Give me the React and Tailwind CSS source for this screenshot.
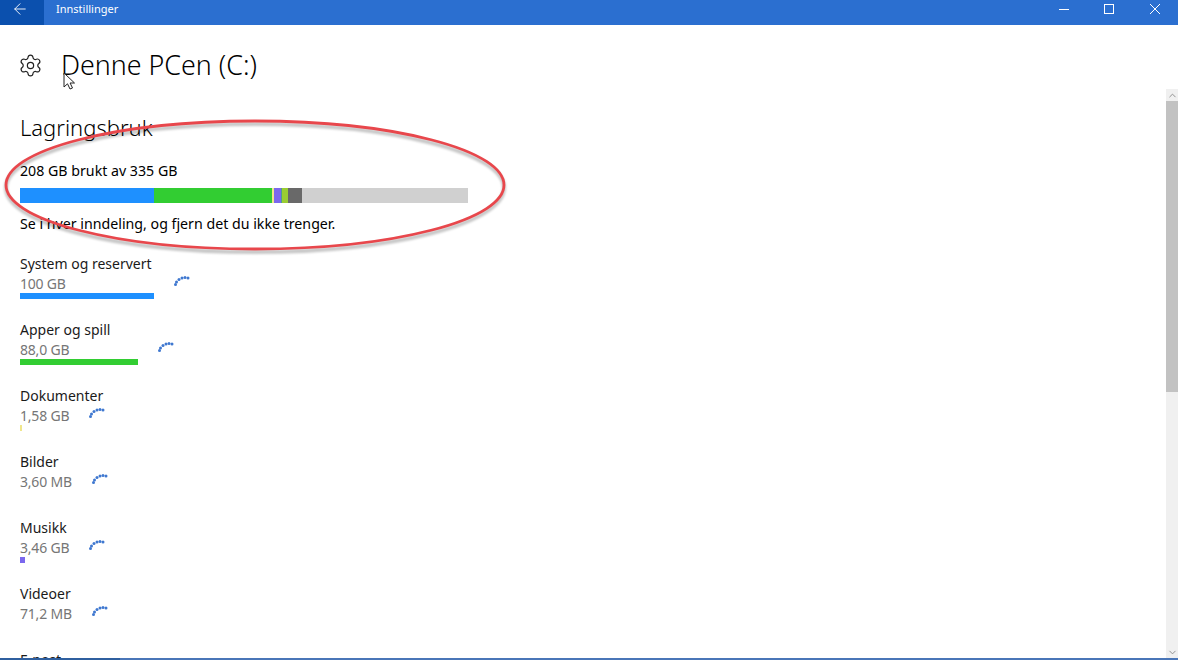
import React from 'react';
import { ArrowLeft, Settings, ChevronUp, ChevronDown } from 'lucide-react';

const categories = [
  { name: 'System og reservert', size: '100 GB', barWidth: 'w-[134px]', barColor: 'bg-[#1e90ff]' },
  { name: 'Apper og spill', size: '88,0 GB', barWidth: 'w-[118px]', barColor: 'bg-[#32cd32]' },
  { name: 'Dokumenter', size: '1,58 GB', barWidth: 'w-[2px]', barColor: 'bg-[#f0e68c]' },
  { name: 'Bilder', size: '3,60 MB', barWidth: 'w-0', barColor: 'bg-white' },
  { name: 'Musikk', size: '3,46 GB', barWidth: 'w-[5px]', barColor: 'bg-[#7b68ee]' },
  { name: 'Videoer', size: '71,2 MB', barWidth: 'w-0', barColor: 'bg-white' },
  { name: 'E-post', size: '', barWidth: 'w-0', barColor: 'bg-white' },
];

const segments = [
  'w-[134px] bg-[#1e90ff]',
  'w-[118px] bg-[#32cd32]',
  'w-[2px] bg-[#f0e68c]',
  'w-[7px] bg-[#7b68ee]',
  'w-[1px] bg-[#4f9d8f]',
  'w-[6px] bg-[#9acd32]',
  'w-[14px] bg-[#696969]',
  'flex-1 bg-[#d0d0d0]',
];

// loading dots, frozen mid animation
function Spinner() {
  const dots = [[1.5, 9.5], [2.5, 7], [5, 4.5], [8, 3], [11, 2.5], [14, 3]];
  return (
    <svg width="16" height="12" viewBox="0 0 16 12" className="mt-[22px] shrink-0">
      {dots.map(([cx, cy]) => (
        <circle key={cx} cx={cx} cy={cy} r="1.5" fill="#3f78d0" />
      ))}
    </svg>
  );
}

function CategoryRow({ item }) {
  return (
    <div className="flex h-[66px] items-start gap-[20px]">
      <div className="pt-[1px]">
        <div className="w-0 whitespace-nowrap text-[14px] leading-[20px] text-[#1a1a1a]">{item.name}</div>
        <div className="whitespace-nowrap text-[14px] leading-[20px] tracking-[-0.2px] text-[#767676]">{item.size}</div>
        <div className={`-mt-[1px] h-[6px] ${item.barWidth} ${item.barColor}`} />
      </div>
      {item.size && <Spinner />}
    </div>
  );
}

export default function App() {
  return (
    <div className="relative flex h-[660px] w-[1178px] flex-col overflow-hidden bg-white font-['Noto_Sans','Open_Sans',sans-serif]">
      {/* Title bar */}
      <div className="flex h-[25px] shrink-0 items-start bg-[#2b6fd0] text-white">
        <div className="flex h-full w-[44px] items-start justify-center bg-[#0b50ae] pr-1">
          <ArrowLeft size={18} strokeWidth={1.2} />
        </div>
        <span className="ml-3 text-[11px] leading-[17px]">Innstillinger</span>
        <div className="ml-auto flex items-start pt-[4px]">
          <div className="flex h-[10px] w-[46px] items-center justify-center pl-[1px]"><div className="h-px w-[10px] bg-white" /></div>
          <div className="flex h-[10px] w-[46px] justify-center"><div className="size-[10px] border border-white" /></div>
          <div className="flex h-[10px] w-[46px] justify-center">
            <svg width="10" height="10" viewBox="0 0 10 10" stroke="#fff" strokeWidth="1">
              <path d="M0 0l10 10M10 0L0 10" />
            </svg>
          </div>
        </div>
      </div>

      {/* Page header */}
      <div className="flex h-[64px] shrink-0 items-start pl-[18px] pt-[28px]">
        <Settings size={25} strokeWidth={1.15} className="text-[#222]" />
        <h1 className="ml-[18px] -mt-[6px] text-[26.8px] font-light leading-[36px] text-black">Denne PCen (C:)</h1>
      </div>

      <div className="flex min-h-0 flex-1">
        {/* Content */}
        <div className="min-w-0 flex-1 overflow-hidden pl-[20px] pt-[23px]">
          <h2 className="text-[22px] font-light leading-[30px] text-black">Lagringsbruk</h2>
          <p className="mt-[19px] text-[14.2px] leading-[20px] text-black">208 GB brukt av 335 GB</p>
          <div className="mt-[7px] flex h-[15px] w-[448px]">
            {segments.map((seg) => (
              <div key={seg} className={seg} />
            ))}
          </div>
          <p className="mt-[11px] text-[14.2px] leading-[20px] text-black">Se i hver inndeling, og fjern det du ikke trenger.</p>
          <div className="mt-[19px]">
            {categories.map((item) => (
              <CategoryRow key={item.name} item={item} />
            ))}
          </div>
        </div>

        {/* Scrollbar */}
        <div className="flex w-3 shrink-0 flex-col bg-[#f0f0f0] text-[#8a8a8a]">
          <div className="flex h-3 items-center justify-center"><ChevronUp size={11} strokeWidth={2} /></div>
          <div className="h-[291px] bg-[#c2c2c2]" />
          <div className="mt-auto flex h-3 items-center justify-center"><ChevronDown size={11} strokeWidth={2} /></div>
        </div>
      </div>

      {/* Bottom edge */}
      <div className="flex h-[2px] shrink-0 bg-[#4a76b8]">
        <div className="w-[120px] bg-[#2f5f9f]" />
      </div>

      {/* Red annotation drawn over the screenshot */}
      <svg width="520" height="150" viewBox="0 0 520 150" className="pointer-events-none absolute left-0 top-[110px]">
        <ellipse cx="255" cy="75" rx="249" ry="64" fill="none" stroke="#000" strokeOpacity="0.22" strokeWidth="4" transform="translate(0 3)" className="blur-[1px]" />
        <ellipse cx="255" cy="75" rx="249" ry="64" fill="none" stroke="#e8474c" strokeWidth="2.8" />
      </svg>

      {/* Mouse pointer */}
      <svg width="14" height="19" viewBox="0 0 14 19" className="pointer-events-none absolute left-[63px] top-[72px]">
        <path d="M1 1v14l3.5-3.2L7 17l2.5-1-2.4-5H11.5z" fill="#fff" stroke="#222" strokeWidth="1" />
      </svg>
    </div>
  );
}
